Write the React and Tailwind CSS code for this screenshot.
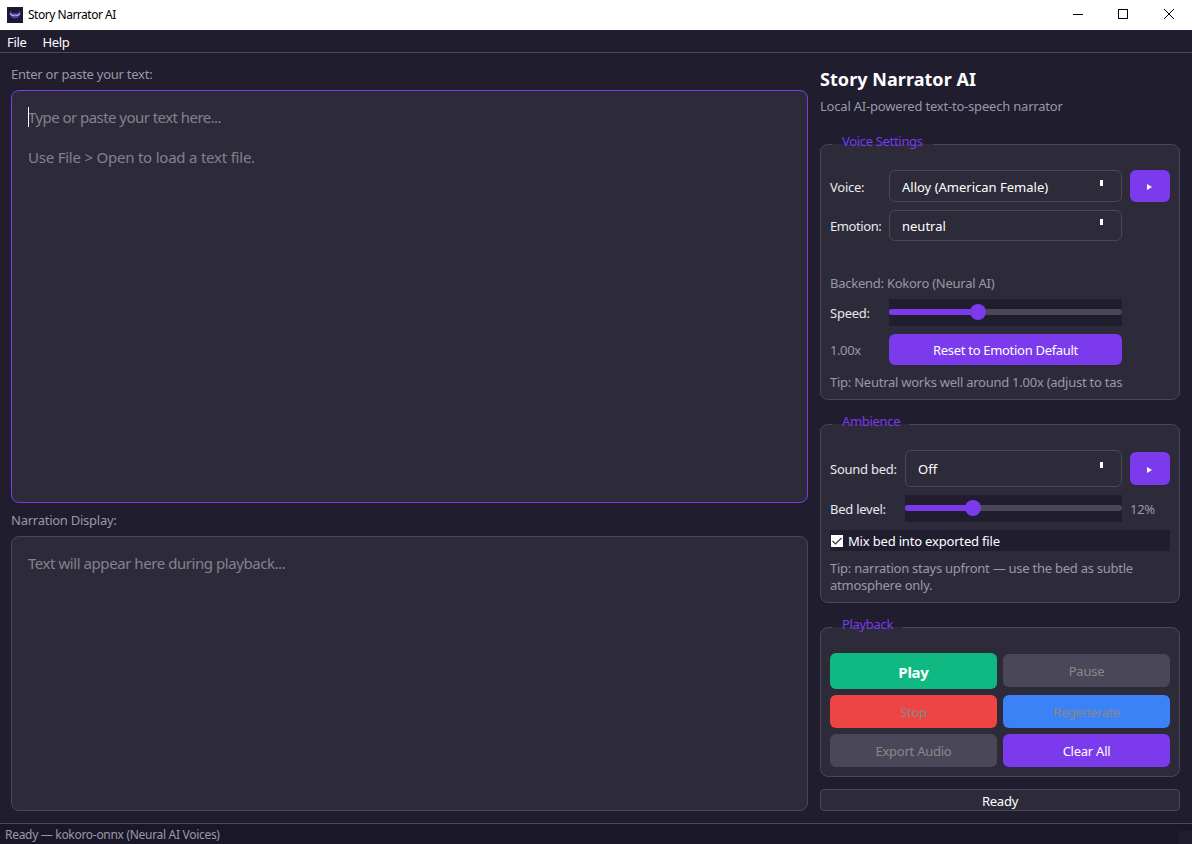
import React from 'react';
import { cva } from 'class-variance-authority';
import { clsx } from 'clsx';

const button = cva('flex w-full items-center justify-center rounded-md pt-0.5', {
    variants: {
        tone: {
            primary: 'bg-[#7c3aed] text-white',
            success: 'bg-[#10b981] text-white text-[15px] font-bold',
            danger: 'bg-[#ef4444] text-[#888888]',
            info: 'bg-[#3b82f6] text-[#888888]',
            disabled: 'bg-[#4a4858] text-[#888888]'
        }
    },
    defaultVariants: { tone: 'primary' }
});

function AppIcon() {
    return (
        <svg width="16" height="16" viewBox="0 0 16 16">
            <rect width="16" height="16" fill="#1a1a33" />
            <path d="M3 3.5 5.5 6h5L13 3.5 13.5 8 11.5 10.5 8 11.5 4.5 10.5 2.5 8Z" fill="#4c2f96" />
            <path d="M3 6.5 5.5 8.5 8 8 10.5 8.5 13 6.5" stroke="#c9a9e6" strokeWidth="1.2" fill="none" />
            <path d="M5.5 10h5" stroke="#7a4fd0" strokeWidth="1" />
        </svg>
    );
}

function TitleBar() {
    return (
        <div className="flex h-[30px] items-center bg-white pl-[7px] text-black">
            <AppIcon />
            <span className="ml-[5px] text-xs tracking-[-0.48px]">Story Narrator AI</span>
            <svg className="ml-auto" width="120" height="30" viewBox="0 0 120 30" fill="none" stroke="#000" shapeRendering="crispEdges">
                <path d="M1 14.5h10" />
                <path d="M46.5 9.5h9v9h-9z" />
                <path d="M92 9l10 10M102 9l-10 10" shapeRendering="auto" />
            </svg>
        </div>
    );
}

function Group({ title, className, gapClass, children }) {
    return (
        <div className={clsx('relative rounded-lg border border-[#4a4858] bg-[#2d2b3a] px-[9px]', className)}>
            <div className={clsx('absolute -top-px left-[11px] h-px bg-[#2d2b3a]', gapClass)} />
            <div className="absolute -top-3 left-[21px] leading-[17px] tracking-[-0.32px] text-[#7c3aed]">{title}</div>
            {children}
        </div>
    );
}

function Select({ value, className, arrowClass }) {
    return (
        <div className={clsx('flex justify-between rounded-md border border-[#4a4858] pl-3 pr-[18px] tracking-normal text-white', className)}>
            <span className="self-center pt-0.5">{value}</span>
            <span className={clsx('h-1.5 w-[3px] bg-white', arrowClass)} />
        </div>
    );
}

function PreviewButton({ className }) {
    return (
        <button className={clsx(button(), className)}>
            <svg className="-ml-px" width="5" height="6" viewBox="0 0 5 6" fill="#fff">
                <path d="M0 0 5 3 0 6Z" />
            </svg>
        </button>
    );
}

function Slider({ fill }) {
    return (
        <div className="relative h-[27px] w-full bg-[#1f1d2e] pt-[10px]">
            <div className="h-1.5 rounded-[3px] bg-[#4a4858]">
                <div className="h-full rounded-l-[3px] bg-[#7c3aed]" style={{ width: fill }} />
            </div>
            <div className="absolute top-[5px] -ml-2 size-4 rounded-full bg-[#7c3aed]" style={{ left: fill }} />
        </div>
    );
}

function EditorColumn() {
    return (
        <div className="flex w-[797px] flex-col text-[#9a98a8]">
            <div className="h-[24px] leading-[17px]">Enter or paste your text:</div>
            <div className="h-[413px] rounded-lg border border-[#7c3aed] bg-[#2d2b3a] px-4 pt-4 text-[15px] leading-5 text-[#83828d]">
                <div className="relative tracking-[-0.55px]">
                    <span className="absolute left-0 top-0 h-5 w-px bg-white" />
                    Type or paste your text here...
                </div>
                <div className="mt-5 tracking-[-0.22px]">Use File &gt; Open to load a text file.</div>
            </div>
            <div className="h-[33px] pt-[9px] leading-[17px]">Narration Display:</div>
            <div className="h-[275px] rounded-lg border border-[#4a4858] bg-[#2d2b3a] px-4 pt-4 text-[15px] leading-5 tracking-[-0.44px] text-[#83828d]">
                Text will appear here during playback...
            </div>
        </div>
    );
}

function VoiceSettings() {
    return (
        <Group title="Voice Settings" className="mt-[29px] h-[256px] pt-[25px]" gapClass="w-[101px]">
            <div className="grid grid-cols-[51px_233px_40px] items-center gap-x-2">
                <span className="pt-0.5">Voice:</span>
                <Select value="Alloy (American Female)" className="h-8" arrowClass="mt-[9px]" />
                <PreviewButton className="h-8" />
                <span className="mt-2 pt-0.5 tracking-[-0.42px]">Emotion:</span>
                <Select value="neutral" className="mt-2 h-[31px]" arrowClass="mt-2" />
            </div>
            <div className="mt-[34px] leading-[17px] text-[#9a98a8]">Backend: Kokoro (Neural AI)</div>
            <div className="mt-[7px] grid grid-cols-[51px_233px] items-center gap-x-2 gap-y-2">
                <span className="pt-0.5">Speed:</span>
                <Slider fill="38.2%" />
                <span className="pt-0.5 tracking-[-0.4px] text-[#9a98a8]">1.00x</span>
                <button className={clsx(button(), 'h-[31px] tracking-[-0.3px]')}>Reset to Emotion Default</button>
            </div>
            <div className="mt-[9px] whitespace-nowrap leading-[17px] text-[#9a98a8]">
                Tip: Neutral works well around 1.00x (adjust to tas
            </div>
        </Group>
    );
}

function Ambience() {
    return (
        <Group title="Ambience" className="mt-6 h-[179px] pt-[25px]" gapClass="w-[77px]">
            <div className="grid grid-cols-[67px_217px_40px] items-center gap-2">
                <span className="whitespace-nowrap pt-0.5">Sound bed:</span>
                <Select value="Off" className="h-[37px]" arrowClass="mt-[11px]" />
                <PreviewButton className="h-[33px]" />
                <span className="pt-0.5">Bed level:</span>
                <Slider fill="31.3%" />
                <span className="pt-0.5 text-[#9a98a8]">12%</span>
            </div>
            <div className="mt-2 flex h-[21px] items-center bg-[#1f1d2e] pl-px text-white">
                <svg width="12" height="12" viewBox="0 0 12 12" fill="none">
                    <rect width="12" height="12" fill="#fff" />
                    <path d="M1.5 6 4.5 9 10.5 3" stroke="#333" strokeWidth="1.2" />
                </svg>
                <span className="ml-[5px] pt-0.5 tracking-[-0.18px]">Mix bed into exported file</span>
            </div>
            <div className="mt-[9px] leading-[17px] text-[#9a98a8]">
                Tip: narration stays upfront — use the bed as subtle
                <br />
                atmosphere only.
            </div>
        </Group>
    );
}

function Playback() {
    return (
        <Group title="Playback" className="mt-6 h-[150px] pt-[25px]" gapClass="w-[70px]">
            <div className="grid grid-cols-2 items-start gap-1.5">
                <button className={clsx(button({ tone: 'success' }), 'h-9')}>Play</button>
                <button className={clsx(button({ tone: 'disabled' }), 'mt-px h-[33px]')}>Pause</button>
                <button className={clsx(button({ tone: 'danger' }), 'h-[33px]')}>Stop</button>
                <button className={clsx(button({ tone: 'info' }), 'h-[33px] tracking-[-0.4px]')}>Regenerate</button>
                <button className={clsx(button({ tone: 'disabled' }), 'h-[33px]')}>Export Audio</button>
                <button className={clsx(button(), 'h-[33px]')}>Clear All</button>
            </div>
        </Group>
    );
}

export default function App() {
    return (
        <div className="flex h-[844px] w-[1192px] flex-col overflow-hidden bg-[#1f1d2e] font-['Noto_Sans',sans-serif] text-[13px] leading-[17px] tracking-[-0.25px] text-[#e8e8ee]">
            <TitleBar />
            <div className="flex h-[23px] items-center gap-4 border-b border-[#4a4858] pl-[7px] pt-0.5 tracking-[-0.35px] text-white">
                <span>File</span>
                <span>Help</span>
            </div>
            <div className="flex h-[770px] gap-3 pl-[11px] pt-[13px]">
                <EditorColumn />
                <div className="w-[360px]">
                    <h1 className="pt-px text-lg font-bold leading-6 tracking-[0.05px] text-white">Story Narrator AI</h1>
                    <div className="mt-[7px] leading-[17px] tracking-[-0.2px] text-[#9a98a8]">Local AI-powered text-to-speech narrator</div>
                    <VoiceSettings />
                    <Ambience />
                    <Playback />
                    <div className="mt-3 flex h-[22px] items-center justify-center rounded border border-[#4a4858] bg-[#2d2b3a] pt-0.5 text-white">
                        Ready
                    </div>
                </div>
            </div>
            <div className="flex h-[21px] items-center justify-between border-t border-[#4a4858] bg-[#1a1828] pl-[5px] text-xs tracking-[-0.3px] text-[#9a98a8]">
                <span className="pt-0.5">Ready — kokoro-onnx (Neural AI Voices)</span>
                <span className="h-[13px] w-[13px] self-end bg-[#1f1d2e]" />
            </div>
        </div>
    );
}
